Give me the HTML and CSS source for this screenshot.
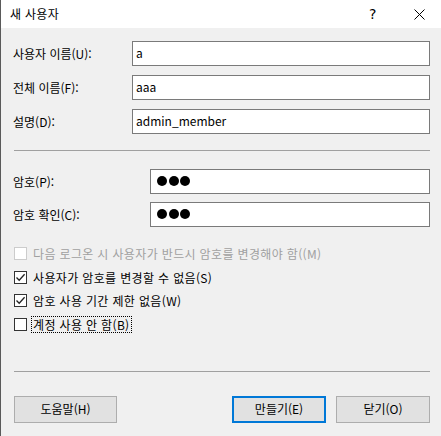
FILE: index.html
```html
<!DOCTYPE html>
<html lang="ko">
<head>
<meta charset="utf-8">
<link rel="stylesheet" href="styles.css">
</head>
<body>
<div class="window">
  <div class="titlebar">
    <span class="title">새 사용자</span>
    <span class="help">?</span>
    <span class="close">
      <svg width="11" height="11" viewBox="0 0 11 11"><path d="M0.5 0.5 L10.5 10.5 M10.5 0.5 L0.5 10.5" stroke="#000" stroke-width="1" fill="none"/></svg>
    </span>
  </div>
  <div class="content">
    <div class="group group-names">
      <div class="row"><label class="lbl">사용자 이름(U):</label><div class="field">a</div></div>
      <div class="row"><label class="lbl">전체 이름(F):</label><div class="field">aaa</div></div>
      <div class="row"><label class="lbl">설명(D):</label><div class="field">admin_member</div></div>
    </div>
    <div class="sep sep1"></div>
    <div class="group group-pw">
      <div class="row"><label class="lbl">암호(P):</label><div class="field"><span class="dot"></span><span class="dot"></span><span class="dot"></span></div></div>
      <div class="row"><label class="lbl">암호 확인(C):</label><div class="field"><span class="dot"></span><span class="dot"></span><span class="dot"></span></div></div>
    </div>
    <div class="checks">
      <div class="check disabled"><span class="box"></span><span class="ctext">다음 로그온 시 사용자가 반드시 암호를 변경해야 함((M)</span></div>
      <div class="check"><span class="box"><svg width="11" height="11" viewBox="0 0 11 11"><path d="M1.5 5.5 L4.2 8.3 L9.6 2.2" stroke="#222" stroke-width="1.3" fill="none"/></svg></span><span class="ctext">사용자가 암호를 변경할 수 없음(S)</span></div>
      <div class="check"><span class="box"><svg width="11" height="11" viewBox="0 0 11 11"><path d="M1.5 5.5 L4.2 8.3 L9.6 2.2" stroke="#222" stroke-width="1.3" fill="none"/></svg></span><span class="ctext">암호 사용 기간 제한 없음(W)</span></div>
      <div class="check"><span class="box"></span><span class="ctext focus">계정 사용 안 함(B)</span></div>
    </div>
    <div class="sep sep2"></div>
    <div class="buttons">
      <button class="btn btn-help">도움말(H)</button>
      <div class="spacer"></div>
      <button class="btn btn-default">만들기(E)</button>
      <button class="btn">닫기(O)</button>
    </div>
  </div>
</div>
</body>
</html>
```
FILE: styles.css
```css
html, body {
  margin: 0;
  padding: 0;
  background: #f0f0f0;
}
.window {
  width: 441px;
  height: 436px;
  box-sizing: border-box;
  border-left: 1px solid #5a5a5a;
  background: #f0f0f0;
  font-family: "Noto Sans CJK KR", "Noto Sans", sans-serif;
  font-size: 12px;
  color: #000;
  display: flex;
  flex-direction: column;
  overflow: hidden;
}
.titlebar {
  height: 28px;
  background: #fff;
  display: flex;
  align-items: center;
  padding-left: 9px;
  flex: none;
}
.title {
  flex: 1;
  font-size: 12px;
  color: #000;
  line-height: 16px;
  letter-spacing: 0.3px;
}
.help {
  width: 14px;
  margin-right: 31px;
  font-size: 14px;
  font-family: "DejaVu Sans", sans-serif;
  line-height: 16px;
}
.close {
  width: 11px;
  height: 11px;
  margin-right: 16px;
  display: flex;
}
.content {
  flex: 1;
  display: flex;
  flex-direction: column;
  padding: 13px 11px 0 12px;
}
.group {
  display: flex;
  flex-direction: column;
}
.group-names { gap: 9px; }
.group-pw { gap: 8px; }
.row {
  display: flex;
  align-items: center;
  height: 25px;
}
.lbl {
  line-height: 16px;
  flex: none;
}
.group-names .lbl { width: 119px; }
.group-pw .lbl { width: 137px; }
.field {
  flex: 1;
  height: 25px;
  box-sizing: border-box;
  border: 1px solid #7a7a7a;
  background: #fff;
  padding-left: 3px;
  display: flex;
  align-items: center;
  line-height: 16px;
  padding-bottom: 2px;
}
.dot {
  width: 10px;
  height: 10px;
  border-radius: 50%;
  background: #000;
  margin-left: 1.5px;
  margin-top: 1px;
}
.dot:first-child { margin-left: 3px; }
.sep {
  height: 1px;
  background: #a0a0a0;
  flex: none;
}
.sep1 { margin: 16px 0 18px 1px; }
.sep2 { margin: 35px 0 24px 1px; }
.checks {
  display: flex;
  flex-direction: column;
  margin-top: 15px;
}
.check {
  height: 23.6px;
  display: flex;
  align-items: center;
}
.box {
  width: 13px;
  height: 13px;
  box-sizing: border-box;
  border: 1px solid #333;
  background: #fff;
  display: flex;
  align-items: center;
  justify-content: center;
  margin-left: 1px;
  margin-right: 4px;
  flex: none;
}
.ctext {
  line-height: 15px;
  padding: 0 1px;
  border: 1px solid transparent;
  letter-spacing: 0.35px;
}
.disabled .box { border-color: #cccccc; }
.disabled .ctext { color: #a0a0a0; }
.focus { border: 1px dotted #000; }
.buttons {
  display: flex;
  align-items: center;
  gap: 10px;
  padding-left: 1px;
}
.spacer { flex: 1; }
.btn {
  height: 27px;
  width: 94px;
  box-sizing: border-box;
  border: 1px solid #adadad;
  background: #e1e1e1;
  font-family: "Noto Sans CJK KR", "Noto Sans", sans-serif;
  font-size: 12px;
  color: #000;
  padding: 0 0 2px 0;
  margin: 0;
}
.btn-help { width: 103px; }
.btn-default { border: 2px solid #0078d7; }
```
